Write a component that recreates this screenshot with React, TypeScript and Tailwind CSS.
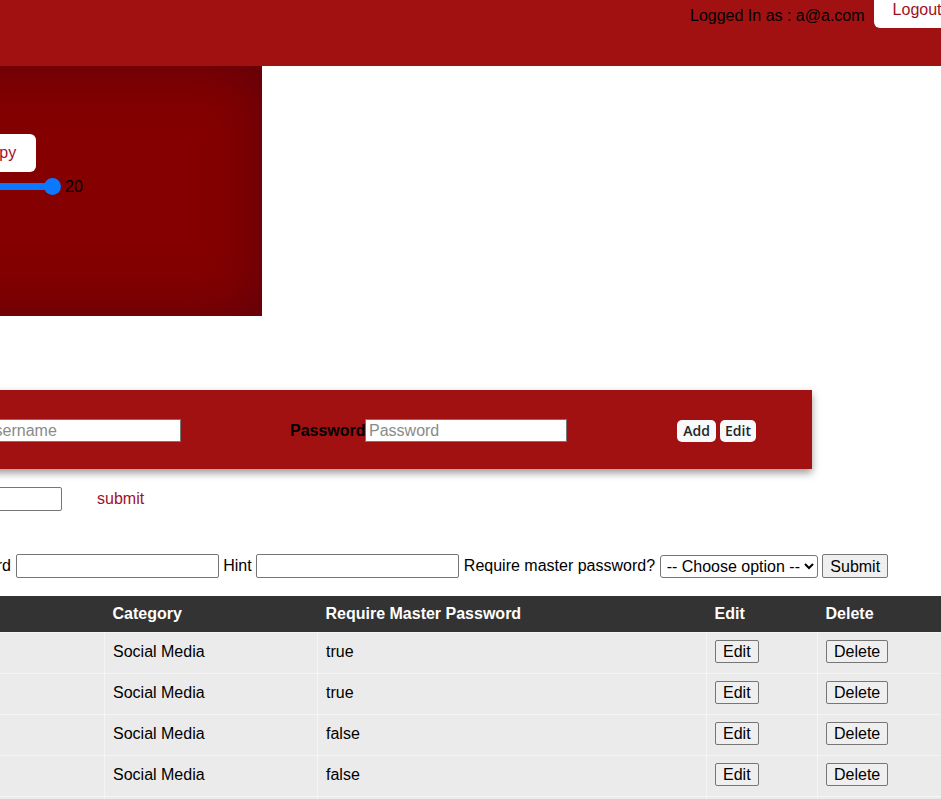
import { useState } from "react";

const ROWS = [
  { site: "facebook.com", user: "a@a.com", category: "Social Media", master: "true" },
  { site: "instagram.com", user: "a@a.com", category: "Social Media", master: "true" },
  { site: "twitter.com", user: "a@a.com", category: "Social Media", master: "false" },
  { site: "reddit.com", user: "a@a.com", category: "Social Media", master: "false" },
  { site: "tiktok.com", user: "a@a.com", category: "Social Media", master: "false" },
];

const fieldClass =
  "h-[24px] border border-[#767676] rounded-[2px] bg-white px-[2px] text-[16px] text-black outline-none";

export default function App() {
  const [length] = useState(20);

  return (
    <div className="w-[941px] overflow-hidden bg-white font-['Liberation_Sans',Arial,sans-serif] text-[16px] text-black">
      {/* page is scrolled sideways, so the left part sits out of view */}
      <div className="ml-[-400px] w-[1400px] pb-10">
        {/* Top bar */}
        <header className="flex h-[66px] items-start bg-[#a21111] pl-[1090px]">
          <span className="mt-[7px] leading-[18px]">Logged In as : a@a.com</span>
          <button className="ml-[9px] h-[28px] rounded-b-[6px] bg-white pl-[19px] pr-[19px] pb-[8px] leading-[18px] text-[#a10f1f]">
            Logout
          </button>
        </header>

        {/* Generator card */}
        <section className="ml-[262px] h-[250px] w-[400px] bg-[#850000] shadow-[inset_0_0_60px_rgba(60,0,20,0.55)]">
          <div className="flex flex-col pl-[97px] pt-[68px]">
            <button className="h-[38px] w-[77px] rounded-[6px] bg-white text-[#a0102a]">Copy</button>
            <div className="ml-[-57px] mt-[6px] flex h-[17px] items-center">
              <div className="h-[7px] w-[146px] rounded-l-full bg-[#0b78ff]" />
              <div className="ml-[-4px] h-[17px] w-[17px] rounded-full bg-[#0b78ff]" />
              <span className="ml-[4px] leading-[18px]">{length}</span>
            </div>
          </div>
        </section>

        {/* Add credential bar */}
        <section className="ml-[100px] mt-[74px] flex h-[79px] w-[1112px] items-center bg-[#a21111] pt-[2px] shadow-[0_4px_8px_rgba(0,0,0,0.4)]">
          <div className="flex w-[481px] items-center justify-end">
            <label className="font-bold">Username</label>
            <input className="h-[23px] w-[202px] border border-[#767676] bg-white px-[3px] placeholder:text-[#8a8a8a] outline-none" placeholder="Username" />
          </div>
          <div className="ml-[109px] flex items-center">
            <label className="w-[75px] font-bold">Password</label>
            <input className="h-[23px] w-[202px] border border-[#767676] bg-white px-[3px] placeholder:text-[#8a8a8a] outline-none" placeholder="Password" />
          </div>
          <div className="ml-[110px] flex items-center gap-[4px] font-['Open_Sans',sans-serif] text-[14px] font-semibold text-[#212529]">
            <button className="h-[22px] w-[39px] rounded-[5px] bg-[#f8f9fa] leading-[20px]">Add</button>
            <button className="h-[22px] w-[36px] rounded-[5px] bg-[#f8f9fa] leading-[20px]">Edit</button>
          </div>
        </section>

        {/* Master password */}
        <div className="ml-[262px] mt-[18px] flex items-center">
          <input type="password" className={`${fieldClass} w-[200px]`} />
          <button className="ml-[35px] leading-[18px] text-[#a0102a]">submit</button>
        </div>

        {/* Add category row */}
        <div className="mt-[43px] flex h-[24px] items-center gap-[4.6px] whitespace-nowrap">
          <span className="w-[411px] text-right">Category Website Username Password</span>
          <input className={`${fieldClass} w-[203px]`} />
          <span>Hint</span>
          <input className={`${fieldClass} w-[203px]`} />
          <span>Require master password?</span>
          <select className="h-[23px] w-[158px] rounded-[3px] border border-[#767676] bg-white pl-[2px] text-[16px]">
            <option>-- Choose option --</option>
            <option>true</option>
            <option>false</option>
          </select>
          <button className="h-[24px] w-[66px] rounded-[2px] border border-[#767676] bg-[#efefef]">Submit</button>
        </div>

        {/* Passwords table */}
        <table className="ml-[100px] mt-[18px] w-[1300px] table-fixed border-collapse text-left">
          <thead>
            <tr className="h-[36px] bg-[#333333] text-white">
              <th className="w-[200px] px-[8px] font-bold">Website</th>
              <th className="w-[204px] px-[8px] font-bold">Username</th>
              <th className="w-[213px] px-[8px] font-bold">Category</th>
              <th className="w-[389px] px-[8px] font-bold">Require Master Password</th>
              <th className="w-[111px] px-[8px] font-bold">Edit</th>
              <th className="w-[183px] px-[8px] font-bold">Delete</th>
            </tr>
          </thead>
          <tbody>
            {ROWS.map((r, i) => (
              <tr key={i} className="h-[41px] bg-[#ebebeb]">
                <td className="border border-[#f5f5f5] px-[8px] pb-[2px]">{r.site}</td>
                <td className="border border-[#f5f5f5] px-[8px] pb-[2px]">{r.user}</td>
                <td className="border border-[#f5f5f5] px-[8px] pb-[2px]">{r.category}</td>
                <td className="border border-[#f5f5f5] px-[8px] pb-[2px]">{r.master}</td>
                <td className="border border-[#f5f5f5] px-[8px] pb-[2px]">
                  <button className="h-[23px] rounded-[2px] border border-[#767676] bg-[#efefef] px-[7px] leading-[20px]">Edit</button>
                </td>
                <td className="border border-[#f5f5f5] px-[8px] pb-[2px]">
                  <button className="h-[23px] rounded-[2px] border border-[#767676] bg-[#efefef] px-[7px] leading-[20px]">Delete</button>
                </td>
              </tr>
            ))}
          </tbody>
        </table>
      </div>
    </div>
  );
}
